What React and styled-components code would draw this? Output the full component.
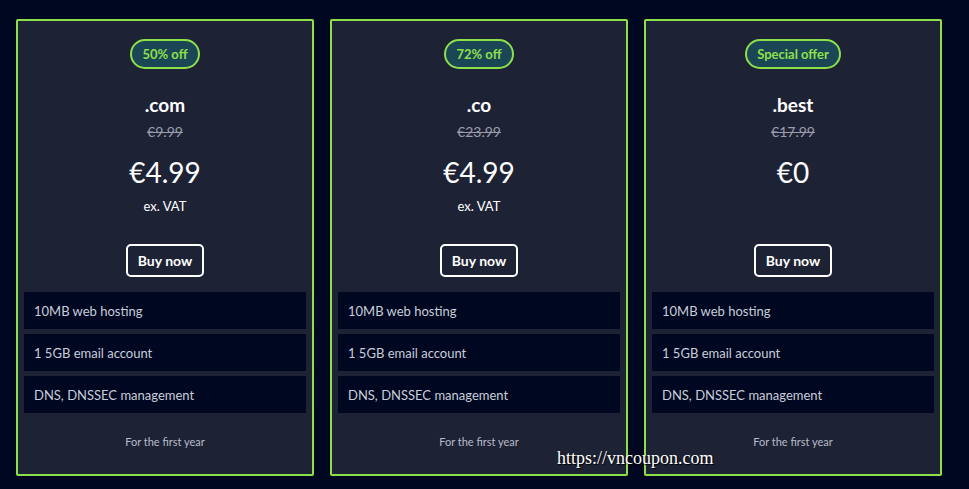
import React from 'react';
import styled, { createGlobalStyle } from 'styled-components';

const GlobalStyle = createGlobalStyle`
  html, body {
    margin: 0;
    padding: 0;
    background: #000720;
  }
  body {
    font-family: Lato, "Noto Sans", sans-serif;
  }
`;

const Page = styled.div`
  position: relative;
  width: 969px;
  height: 489px;
  background: #000720;
  box-sizing: border-box;
  padding: 19px 0 0 16px;
`;

const Cards = styled.div`
  display: flex;
  gap: 16px;
`;

const Card = styled.div`
  width: 298px;
  height: 457px;
  box-sizing: border-box;
  border: 2px solid #8ee04b;
  border-radius: 2px;
  background: #1e2235;
  display: flex;
  flex-direction: column;
  align-items: center;
  padding: 18px 6px 0;
`;

const Badge = styled.div`
  height: 30px;
  box-sizing: border-box;
  padding: 0 10px;
  border: 2px solid #8ee04b;
  border-radius: 15px;
  background: #1a4656;
  color: #8ee04b;
  font-weight: 700;
  font-size: 13px;
  display: flex;
  align-items: center;
`;

const Tld = styled.div`
  margin-top: 24px;
  color: #fff;
  font-weight: 700;
  font-size: 19px;
  line-height: 24px;
`;

const OldPrice = styled.div`
  margin-top: 6px;
  color: #9a9eab;
  font-size: 14px;
  line-height: 18px;
  text-decoration: line-through;
`;

const PriceBlock = styled.div`
  height: 103px;
  display: flex;
  flex-direction: column;
  align-items: center;
`;

const Price = styled.div`
  margin-top: 11px;
  color: #fff;
  font-size: 28px;
  line-height: 40px;
`;

const Vat = styled.div`
  margin-top: 6px;
  color: #fff;
  font-size: 13px;
  line-height: 16px;
`;

const BuyButton = styled.button`
  height: 33px;
  padding: 0 10px;
  border: 2px solid #fff;
  border-radius: 5px;
  background: #1e2235;
  color: #fff;
  font-family: inherit;
  font-weight: 700;
  font-size: 14px;
  cursor: pointer;
`;

const Features = styled.ul`
  list-style: none;
  margin: 15px 0 0;
  padding: 0;
  align-self: stretch;
  display: flex;
  flex-direction: column;
  gap: 5px;
`;

const Feature = styled.li`
  height: 37px;
  background: #000720;
  color: #c9cddb;
  font-size: 13px;
  display: flex;
  align-items: center;
  padding-left: 10px;
`;

const Note = styled.div`
  margin-top: 22px;
  color: #b8bccb;
  font-size: 11px;
`;

const Watermark = styled.div`
  position: absolute;
  left: 557px;
  top: 448px;
  font-family: "Liberation Serif", serif;
  font-size: 18px;
  color: #fff;
  text-shadow: 1px 1px 1px #000;
`;

const plans = [
  { badge: '50% off', tld: '.com', old: '€9.99', price: '€4.99', vat: true },
  { badge: '72% off', tld: '.co', old: '€23.99', price: '€4.99', vat: true },
  { badge: 'Special offer', tld: '.best', old: '€17.99', price: '€0', vat: false },
];

const features = ['10MB web hosting', '1 5GB email account', 'DNS, DNSSEC management'];

export default function App() {
  return (
    <Page>
      <GlobalStyle />
      <Cards>
        {plans.map((p) => (
          <Card key={p.tld}>
            <Badge>{p.badge}</Badge>
            <Tld>{p.tld}</Tld>
            <OldPrice>{p.old}</OldPrice>
            <PriceBlock>
              <Price>{p.price}</Price>
              {p.vat && <Vat>ex. VAT</Vat>}
            </PriceBlock>
            <BuyButton>Buy now</BuyButton>
            <Features>
              {features.map((f) => (
                <Feature key={f}>{f}</Feature>
              ))}
            </Features>
            <Note>For the first year</Note>
          </Card>
        ))}
      </Cards>
      <Watermark>https://vncoupon.com</Watermark>
    </Page>
  );
}
